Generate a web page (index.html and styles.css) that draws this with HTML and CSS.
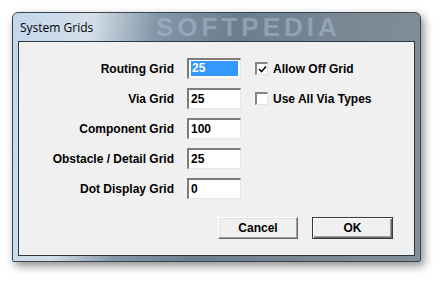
FILE: index.html
```html
<!DOCTYPE html>
<html>
<head>
<meta charset="utf-8">
<link rel="stylesheet" href="styles.css">
</head>
<body>
<div class="window">
  <div class="titlebar">
    <span class="title">System Grids</span>
    <span class="wm">SOFTPEDIA</span>
  </div>
  <div class="client">
    <div class="form">
      <div class="lbl">Routing Grid</div>
      <div class="field"><span class="hl">25</span></div>
      <div class="chk"><span class="box"><svg width="9" height="9" viewBox="0 0 9 9"><polyline points="1,4 3.5,6.5 8,1.5" fill="none" stroke="#000" stroke-width="1.6"/></svg></span>Allow Off Grid</div>

      <div class="lbl">Via Grid</div>
      <div class="field">25</div>
      <div class="chk"><span class="box"></span>Use All Via Types</div>

      <div class="lbl">Component Grid</div>
      <div class="field">100</div>
      <div></div>

      <div class="lbl">Obstacle / Detail Grid</div>
      <div class="field">25</div>
      <div></div>

      <div class="lbl">Dot Display Grid</div>
      <div class="field">0</div>
      <div></div>
    </div>
    <div class="buttons">
      <div class="btn">Cancel</div>
      <div class="btn default">OK</div>
    </div>
  </div>
</div>
</body>
</html>
```

FILE: styles.css
```css
html, body {
  margin: 0;
  padding: 0;
  background: #ffffff;
}
body {
  width: 442px;
  height: 283px;
  overflow: hidden;
}
.window {
  margin: 12px 0 0 12px;
  width: 409px;
  height: 250px;
  box-sizing: border-box;
  border: 1px solid #3b454d;
  border-radius: 6px 6px 2px 2px;
  background: linear-gradient(100deg, #c3d8ec 0%, #d3dee8 18%, #8497a8 32%, #6c7e8e 50%, #7a8894 75%, #83909b 100%);
  box-shadow: 3px 4px 10px rgba(0,0,0,0.45);
  display: flex;
  flex-direction: column;
  padding: 0 5px 5px 5px;
}
.titlebar {
  height: 28px;
  position: relative;
  display: flex;
  align-items: center;
  padding-left: 2px;
}
.title {
  font-family: "Open Sans", "DejaVu Sans", sans-serif;
  font-size: 12px;
  color: #000;
  position: relative;
  z-index: 1;
}
.wm {
  position: absolute;
  left: 138px;
  top: 2px;
  line-height: 24px;
  font-family: "Liberation Sans", Arial, sans-serif;
  font-weight: bold;
  font-size: 26px;
  letter-spacing: 4px;
  color: rgba(165, 185, 205, 0.6);
}
.client {
  flex: 1;
  background: #f0f0f0;
  border: 1px solid #2c363e;
  display: flex;
  flex-direction: column;
  font-family: "Liberation Sans", Arial, sans-serif;
  font-weight: bold;
  font-size: 12px;
  color: #000;
}
.form {
  display: grid;
  grid-template-columns: 155px 54px auto;
  grid-auto-rows: 21px;
  row-gap: 9px;
  margin-top: 16px;
}
.lbl {
  text-align: right;
  align-self: center;
  white-space: nowrap;
}
.field {
  margin-left: 13px;
  width: 54px;
  height: 21px;
  box-sizing: border-box;
  background: #fff;
  border-style: solid;
  border-width: 2px 1px 1px 2px;
  border-color: #7c7c7c #e6e6e6 #e6e6e6 #7c7c7c;
  padding: 1px 2px 0 2px;
  line-height: 16px;
}
.hl {
  display: block;
  background: #3399ff;
  color: #fff;
  height: 15px;
  line-height: 15px;
  padding-left: 1px;
}
.chk {
  margin-left: 27px;
  display: flex;
  align-items: center;
  white-space: nowrap;
}
.box {
  width: 13px;
  height: 13px;
  box-sizing: border-box;
  background: #fff;
  border-style: solid;
  border-width: 2px 1px 1px 2px;
  border-color: #858585 #e3e3e3 #e3e3e3 #858585;
  margin-right: 5px;
  display: flex;
  align-items: center;
  justify-content: center;
}
.box svg {
  display: block;
}
.buttons {
  display: flex;
  justify-content: flex-end;
  gap: 14px;
  margin-top: 18px;
  padding-right: 21px;
}
.btn {
  width: 80px;
  height: 22px;
  box-sizing: border-box;
  background: #f0f0f0;
  border: 1px solid;
  border-color: #ffffff #696969 #696969 #ffffff;
  box-shadow: inset -1px -1px 0 #a0a0a0, inset 1px 1px 0 #e3e3e3;
  display: flex;
  align-items: center;
  justify-content: center;
}
.btn.default {
  width: 81px;
  border: 1px solid #3a3a3a;
  box-shadow: inset 1px 1px 0 #ffffff, inset -1px -1px 0 #696969, inset -2px -2px 0 #a0a0a0;
}
```
